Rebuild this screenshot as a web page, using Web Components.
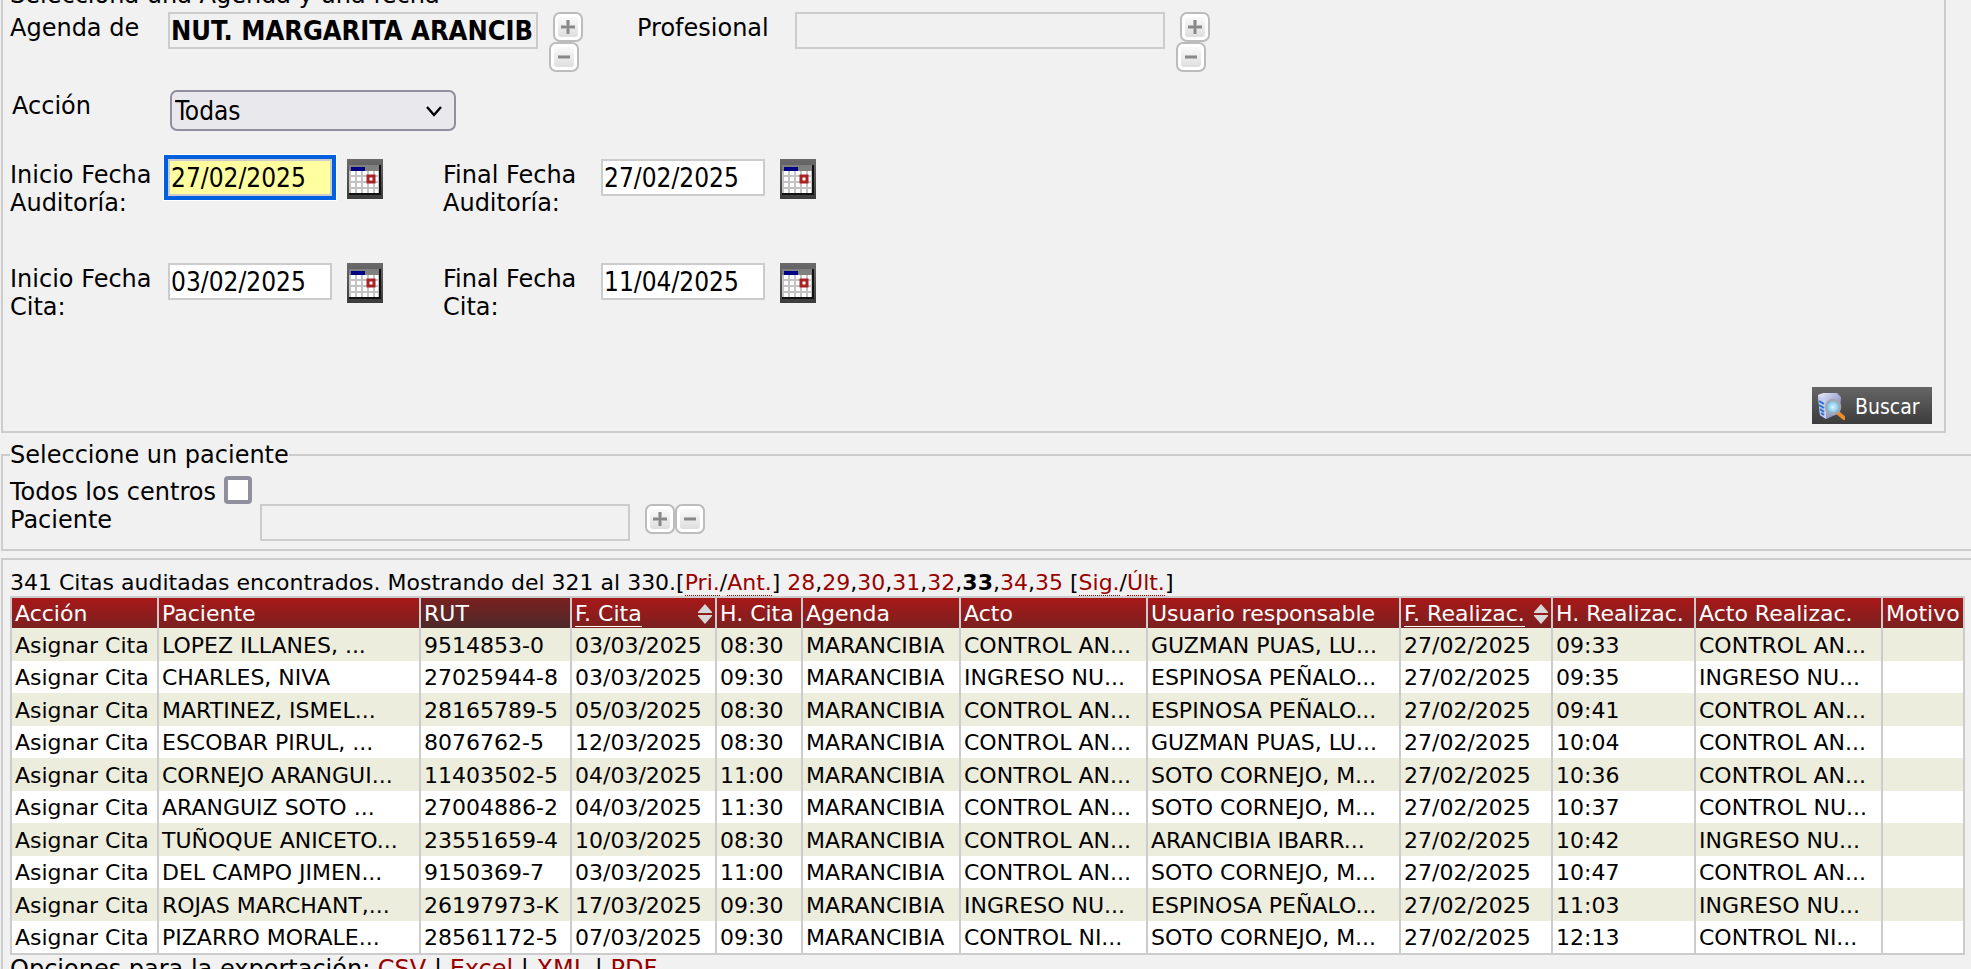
<!DOCTYPE html>
<html lang="es">
<head>
<meta charset="utf-8">
<title>Auditoría de citas</title>
<style>
html { background: #f1f1f1; }
body { margin: 0; overflow: hidden; height: 100vh; background: #f1f1f1; color: #000; font: 24px/28px "DejaVu Sans", Verdana, sans-serif; }
</style>
</head>
<body>
<audit-page></audit-page>
<script>
const define = (name, html, init) => customElements.define(name, class extends HTMLElement {
  connectedCallback() {
    if (this.shadowRoot) return;
    this.attachShadow({ mode: 'open' }).innerHTML = typeof html === 'function' ? html(this) : html;
    if (init) init(this);
  }
});
const attr = (el, n, d = '') => el.getAttribute(n) ?? d;

define('icon-button', el => `
<style>
:host { display: block; }
button { display: block; width: 30px; height: 30px; padding: 0; border: 0; background: none; }
svg { display: block; }
</style>
<button type="button" aria-label="${attr(el, 'label')}">
<svg width="30" height="30" viewBox="0 0 30 30">
<defs><linearGradient id="g" x1="0" y1="0" x2="0" y2="1"><stop offset="0" stop-color="#fafafa"/><stop offset="1" stop-color="#dedede"/></linearGradient></defs>
<rect x="1" y="1" width="28" height="28" rx="6" fill="#fff" stroke="#bcbcbc" stroke-width="2"/>
<rect x="5" y="5" width="20" height="20" rx="3" fill="url(#g)"/>
<path d="${attr(el, 'kind') === 'plus' ? 'M8 15H22M15 8V22' : 'M9 15H21'}" stroke="#b8b8b8" stroke-width="4"/>
<path d="${attr(el, 'kind') === 'plus' ? 'M8 15H22M15 8V22' : 'M9 15H21'}" stroke="#888" stroke-width="2"/>
</svg></button>`);

define('calendar-button', el => `
<style>
:host { display: block; }
button { display: block; width: 36px; height: 40px; padding: 0; border: 0; background: none; }
svg { display: block; }
</style>
<button type="button" aria-label="Abrir calendario">
<svg width="36" height="40" viewBox="0 0 36 40">
<defs><linearGradient id="g" x1="0" y1="0" x2="0" y2="1"><stop offset="0" stop-color="#6a6a6a"/><stop offset="1" stop-color="#3c3c3c"/></linearGradient></defs>
<rect width="36" height="40" fill="url(#g)"/>
<path d="M2 6H32V12H2Z" fill="#808080"/>
<path d="M2 35H33V6" fill="none" stroke="#111" stroke-width="2"/>
<rect x="2" y="12" width="30" height="22" fill="#c3c3c3"/>
<rect x="4" y="8" width="14" height="4" fill="#000084"/>
<path d="M4 14H31M4 20H31M4 26H31M4 32H31" stroke="#fff" stroke-width="4" stroke-dasharray="4 2"/>
<rect x="21" y="17" width="6" height="6" fill="#fff" stroke="#a22" stroke-width="3"/>
</svg></button>`);

define('text-field', el => `
<style>
:host { display: flex; align-items: flex-start; }
label { flex: none; box-sizing: border-box; width: var(--label-width, 158px); padding-top: 2px; }
input { flex: none; box-sizing: border-box; width: var(--field-width, 370px); height: 37px; margin: 0; padding: 0 1px; border: 2px solid #ccc; border-radius: 0; background: #fff; color: #000; font: 26px "DejaVu Sans Condensed", Tahoma, sans-serif; outline: 0; }
input[readonly] { background: #f1f1f1; font-weight: bold; font-size: 27px; }
:host([active]) input { background: #ffffa0; box-shadow: 0 0 0 4px #0060df, 0 0 0 5px #fff; }
.actions { display: flex; margin-left: 15px; }
:host([stacked]) .actions { display: grid; margin-left: 11px; }
:host([stacked]) ::slotted(:first-child) { margin-left: 4px; }
</style>
<label for="f">${attr(el, 'label')}</label>
<input id="f" type="text" value="${attr(el, 'value')}"${el.hasAttribute('locked') ? ' readonly' : ''}>
<div class="actions"><slot></slot></div>`);

define('select-field', el => `
<style>
:host { display: flex; align-items: flex-start; padding-left: 2px; }
label { width: 158px; padding-top: 2px; }
.box { display: grid; align-items: center; }
select, svg { grid-area: 1 / 1; }
select { appearance: none; box-sizing: border-box; width: 286px; height: 41px; margin: 0; padding: 0 3px; border: 2px solid #8f8f9d; border-radius: 7px; background: #e9e9ed; color: #000; font: 26px "DejaVu Sans Condensed", Tahoma, sans-serif; }
svg { justify-self: end; margin-right: 14px; pointer-events: none; }
</style>
<label for="s">${attr(el, 'label')}</label>
<div class="box"><select id="s"><option>${attr(el, 'value')}</option></select>
<svg width="16" height="12" viewBox="0 0 16 12"><path d="M1 2L8 10L15 2" fill="none" stroke="#000" stroke-width="2.4"/></svg></div>`);

define('check-field', el => `
<style>
:host { display: flex; align-items: flex-start; height: 28px; }
label { padding-top: 2px; margin-right: 8px; white-space: nowrap; }
input { appearance: none; box-sizing: border-box; width: 28px; height: 28px; margin: 0; border: 4px solid #8f8f9d; border-radius: 4px; background: #fff; }
</style>
<label for="c">${attr(el, 'label')}</label><input id="c" type="checkbox">`);

define('search-button', `
<style>
:host { display: block; }
button { display: flex; align-items: center; gap: 10px; width: 120px; height: 37px; padding: 2px 5px 0; border: 0; background: linear-gradient(#666, #3c3c3c); color: #fff; font: 21px/28px "DejaVu Sans Condensed", Tahoma, sans-serif; }
svg { flex: none; }
</style>
<button type="button">
<svg width="28" height="28" viewBox="0 0 28 28">
<defs><linearGradient id="s" x1="0" y1="0" x2="1" y2="1"><stop offset="0" stop-color="#e8ecfb"/><stop offset="1" stop-color="#6a72b8"/></linearGradient>
<radialGradient id="l"><stop offset="0" stop-color="#d8f8ff"/><stop offset="1" stop-color="#66b8ec"/></radialGradient></defs>
<path d="M1 2L6 0L20 0L24 4L23 20L9 26L3 22Z" fill="url(#s)"/>
<path d="M1 3L9 6L9 26L3 22Z" fill="#c3cdf0"/><path d="M2 8L7 11M2 12L7 15M3 16L7 19M4 20L7 22" stroke="#2c6fd0" stroke-width="2"/>
<path d="M21 20L27 25" stroke="#f08a24" stroke-width="4" stroke-linecap="round"/>
<circle cx="16" cy="14" r="7" fill="url(#l)" stroke="#a4a8ac" stroke-width="2.5"/>
</svg>Buscar</button>`);

define('field-panel', el => `
<style>
:host { display: block; }
fieldset { min-width: 0; margin: 0; padding: 0 7px; border: 2px solid #ccc; }
:host([open-end]) fieldset { border-right: 0; padding-right: 6px; }
legend { padding: 0; }
</style>
<fieldset>${el.hasAttribute('heading') ? `<legend>${attr(el, 'heading')}</legend>` : ''}<slot></slot></fieldset>`);

define('page-nav', `
<style>
:host { display: block; white-space: nowrap; font-size: 22px; line-height: 26px; }
a { color: #900; text-decoration: none; }
a.step { border-bottom: 1px dotted #900; }
</style>
341 Citas auditadas encontrados. Mostrando del 321 al 330.[<a class="step" href="#">Pri.</a>/<a class="step" href="#">Ant.</a>] <a href="#">28</a>,<a href="#">29</a>,<a href="#">30</a>,<a href="#">31</a>,<a href="#">32</a>,<b>33</b>,<a href="#">34</a>,<a href="#">35</a> [<a class="step" href="#">Sig.</a>/<a class="step" href="#">Últ.</a>]`);

define('export-links', `
<style>:host { display: block; white-space: nowrap; } a { color: #900; text-decoration: none; }</style>
Opciones para la exportación: <a href="#">CSV</a> | <a href="#">Excel</a> | <a href="#">XML</a> | <a href="#">PDF</a>`);

define('sort-arrows', `
<style>:host { display: block; flex: none; } svg { display: block; }</style>
<svg width="14" height="20" viewBox="0 0 14 20"><path d="M7 0L14 8V9H0V8ZM7 20L14 12V11H0V12Z" fill="#d8d8d8"/></svg>`);

const columns = [['Acción', 147], ['Paciente', 262], ['RUT', 151], ['F. Cita', 145], ['H. Cita', 86], ['Agenda', 158], ['Acto', 187], ['Usuario responsable', 253], ['F. Realizac.', 152], ['H. Realizac.', 143], ['Acto Realizac.', 187], ['Motivo', 0]];
const rows = [
  ['LOPEZ ILLANES, ...', '9514853-0', '03/03/2025', '08:30', 'CONTROL AN...', 'GUZMAN PUAS, LU...', '09:33', 'CONTROL AN...'],
  ['CHARLES, NIVA', '27025944-8', '03/03/2025', '09:30', 'INGRESO NU...', 'ESPINOSA PEÑALO...', '09:35', 'INGRESO NU...'],
  ['MARTINEZ, ISMEL...', '28165789-5', '05/03/2025', '08:30', 'CONTROL AN...', 'ESPINOSA PEÑALO...', '09:41', 'CONTROL AN...'],
  ['ESCOBAR PIRUL, ...', '8076762-5', '12/03/2025', '08:30', 'CONTROL AN...', 'GUZMAN PUAS, LU...', '10:04', 'CONTROL AN...'],
  ['CORNEJO ARANGUI...', '11403502-5', '04/03/2025', '11:00', 'CONTROL AN...', 'SOTO CORNEJO, M...', '10:36', 'CONTROL AN...'],
  ['ARANGUIZ SOTO ...', '27004886-2', '04/03/2025', '11:30', 'CONTROL AN...', 'SOTO CORNEJO, M...', '10:37', 'CONTROL NU...'],
  ['TUÑOQUE ANICETO...', '23551659-4', '10/03/2025', '08:30', 'CONTROL AN...', 'ARANCIBIA IBARR...', '10:42', 'INGRESO NU...'],
  ['DEL CAMPO JIMEN...', '9150369-7', '03/03/2025', '11:00', 'CONTROL AN...', 'SOTO CORNEJO, M...', '10:47', 'CONTROL AN...'],
  ['ROJAS MARCHANT,...', '26197973-K', '17/03/2025', '09:30', 'INGRESO NU...', 'ESPINOSA PEÑALO...', '11:03', 'INGRESO NU...'],
  ['PIZARRO MORALE...', '28561172-5', '07/03/2025', '09:30', 'CONTROL NI...', 'SOTO CORNEJO, M...', '12:13', 'CONTROL NI...']
];
const sortable = ['F. Cita', 'F. Realizac.'];

define('audit-table', () => `
<style>
:host { display: block; font-size: 22px; }
table { box-sizing: border-box; width: 100%; table-layout: fixed; border-spacing: 0; border: 2px solid #ccc; background: #fff; }
th, td { box-sizing: border-box; padding: 2px 0 0 3px; border-right: 2px solid #ccc; text-align: left; font-weight: normal; white-space: nowrap; }
th:last-child, td:last-child { border-right: 0; }
th { height: 30px; color: #fff; background: linear-gradient(#a81818, #7b2020); }
th.current { background: linear-gradient(#7b2020, #4c2a2a); }
th div { display: flex; align-items: center; justify-content: space-between; padding-right: 3px; }
a { color: #fff; text-decoration: none; line-height: 24px; border-bottom: 1px solid #fff; }
td { height: 32px; }
tbody tr:nth-child(odd) td { height: 33px; background: #ededdd; }
</style>
<table>
<colgroup>${columns.map(([, w]) => w ? `<col style="width:${w}px">` : '<col>').join('')}</colgroup>
<thead><tr>${columns.map(([c]) => sortable.includes(c)
  ? `<th scope="col"><div><a href="#">${c}</a><sort-arrows></sort-arrows></div></th>`
  : `<th scope="col"${c === 'RUT' ? ' class="current"' : ''}>${c}</th>`).join('')}</tr></thead>
<tbody>${rows.map(([p, rut, d, h, a, u, hr, ar]) => `<tr>${['Asignar Cita', p, rut, d, h, 'MARANCIBIA', a, u, '27/02/2025', hr, ar, ''].map(t => `<td>${t}</td>`).join('')}</tr>`).join('')}</tbody>
</table>`);

define('audit-page', `
<style>
:host { display: block; padding-left: 1px; margin-top: -19px; }
.agenda { margin-right: 25px; }
.row { display: grid; align-items: start; }
.r1 { grid-template-columns: 627px 1fr; padding-top: 3px; min-height: 78px; --label-width: 158px; }
.r2 { min-height: 69px; }
.dates { grid-template-columns: 433px 1fr; min-height: 104px; --field-width: 164px; }
.last { min-height: 124px; }
.search { display: flex; justify-content: flex-end; padding: 0 5px 7px 0; }
.patient { margin-top: 8px; }
.patient .body { padding: 7px 0 8px; --label-width: 250px; }
.results { margin-top: 7px; }
.results page-nav { padding-top: 10px; }
</style>
<field-panel class="agenda" heading="Selecciona una Agenda y una fecha">
  <div class="row r1">
    <text-field stacked locked label="Agenda de" value="NUT. MARGARITA ARANCIBIA"><icon-button kind="plus" label="Añadir agenda"></icon-button><icon-button kind="minus" label="Quitar agenda"></icon-button></text-field>
    <text-field stacked locked label="Profesional"><icon-button kind="plus" label="Añadir profesional"></icon-button><icon-button kind="minus" label="Quitar profesional"></icon-button></text-field>
  </div>
  <div class="row r2"><select-field label="Acción" value="Todas"></select-field></div>
  <div class="row dates">
    <text-field active label="Inicio Fecha Auditoría:" value="27/02/2025"><calendar-button></calendar-button></text-field>
    <text-field label="Final Fecha Auditoría:" value="27/02/2025"><calendar-button></calendar-button></text-field>
  </div>
  <div class="row dates last">
    <text-field label="Inicio Fecha Cita:" value="03/02/2025"><calendar-button></calendar-button></text-field>
    <text-field label="Final Fecha Cita:" value="11/04/2025"><calendar-button></calendar-button></text-field>
  </div>
  <div class="search"><search-button></search-button></div>
</field-panel>
<field-panel class="patient" open-end heading="Seleccione un paciente">
  <div class="body">
    <check-field label="Todos los centros"></check-field>
    <text-field locked label="Paciente"><icon-button kind="plus" label="Añadir paciente"></icon-button><icon-button kind="minus" label="Quitar paciente"></icon-button></text-field>
  </div>
</field-panel>
<field-panel class="results" open-end>
  <page-nav></page-nav>
  <audit-table></audit-table>
  <export-links></export-links>
</field-panel>`, el => {
  const first = el.shadowRoot.querySelector('text-field[active]').shadowRoot.querySelector('input');
  first.focus({ preventScroll: true });
  first.setSelectionRange(0, 0);
});
</script>
</body>
</html>
